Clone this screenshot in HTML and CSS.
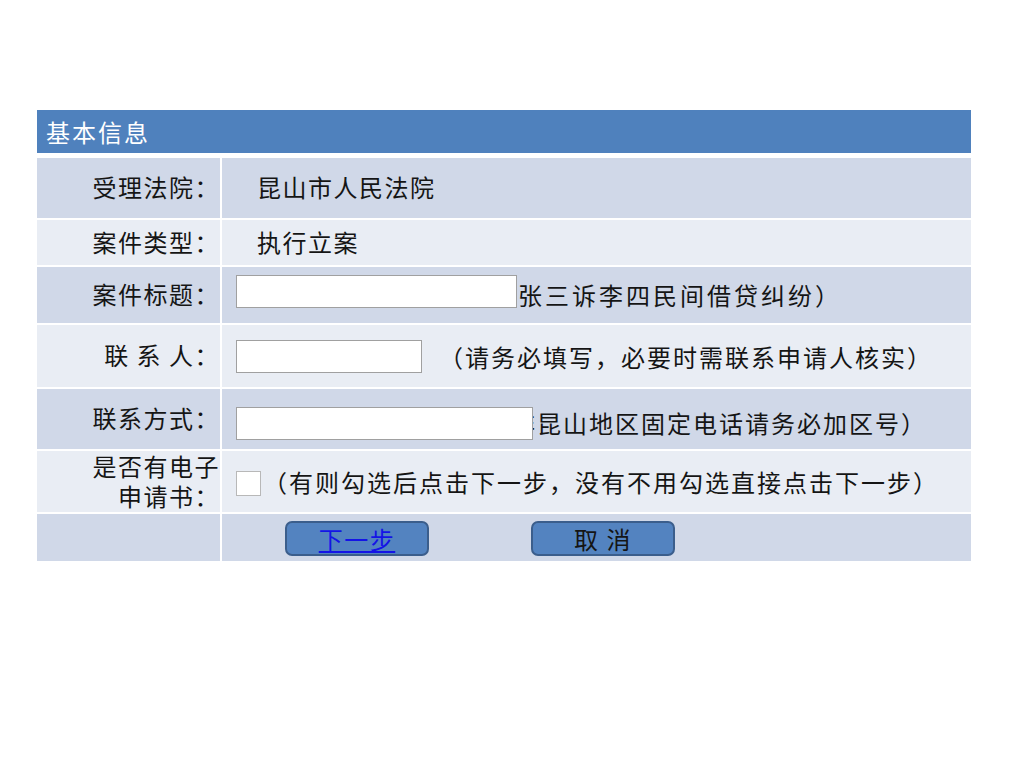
FILE: index.html
```
<!doctype html>
<html>

<head>
    <meta charset="UTF-8">
    <title>基本信息</title>
    <link rel="stylesheet" href="styles.css">
</head>

<body>
<div class="slide">
    <div class="infoTable">
        <div class="head">基本信息</div>

        <div class="label dark">受理法院：</div>
        <div class="value dark plain">昆山市人民法院</div>

        <div class="label light">案件类型：</div>
        <div class="value light plain">执行立案</div>

        <div class="label dark">案件标题：</div>
        <div class="value dark">
            <input class="box boxTitle" type="text">
            <span class="hint hintTitle">（如张三诉李四民间借贷纠纷）</span>
        </div>

        <div class="label light">联 系 人：</div>
        <div class="value light">
            <input class="box boxName" type="text">
            <span class="hint hintName">（请务必填写，必要时需联系申请人核实）</span>
        </div>

        <div class="label dark">联系方式：</div>
        <div class="value dark">
            <input class="box boxPhone" type="text">
            <span class="hint hintPhone">（非昆山地区固定电话请务必加区号）</span>
        </div>

        <div class="label light twoLine">是否有电子<br>申请书：</div>
        <div class="value light">
            <span class="check"></span>
            <span class="hint">（有则勾选后点击下一步，没有不用勾选直接点击下一步）</span>
        </div>

        <div class="label dark"></div>
        <div class="value dark btnRow">
            <div class="btn"><a href="#">下一步</a></div>
            <div class="btn">取 消</div>
        </div>
    </div>
</div>
</body>

</html>
```
FILE: styles.css
```
body {
    margin: 0;
    background-color: #fff;
    font-family: "Noto Sans CJK SC", "Noto Sans", sans-serif;
}

.slide {
    width: 1024px;
    height: 768px;
    padding: 110px 0 0 37px;
    box-sizing: border-box;
}

.infoTable {
    width: 934px;
    display: grid;
    grid-template-columns: 183px 1fr;
    grid-template-rows: 46px 60px 45px 56px 62px 60px 61px 47px;
    gap: 2px;
    font-size: 24px;
    letter-spacing: 1.5px;
    color: #151515;
}

.head {
    grid-column: 1 / 3;
    margin-bottom: 3px;
    background-color: #4f81bd;
    color: #fff;
    padding-left: 9px;
    display: flex;
    align-items: center;
    font-size: 24px;
    letter-spacing: 2px;
}

.dark {
    background-color: #d0d8e8;
}

.light {
    background-color: #e9edf4;
}

.label {
    display: flex;
    align-items: center;
    justify-content: flex-end;
    text-align: right;
    white-space: nowrap;
    padding-bottom: 3px;
}

.label.twoLine {
    line-height: 30px;
    padding-bottom: 2px;
}

.value {
    position: relative;
    display: flex;
    align-items: center;
    padding-left: 14px;
    white-space: nowrap;
}

.value.plain {
    padding-left: 35px;
    padding-bottom: 3px;
}

.hint {
    letter-spacing: 2px;
}

.box {
    height: 33px;
    margin: 0;
    padding: 0;
    box-sizing: border-box;
    border: 1px solid #a0a0a0;
    background-color: #fff;
    outline: none;
}

.boxTitle {
    position: absolute;
    left: 14px;
    top: 8px;
    width: 281px;
    z-index: 2;
}

.boxName {
    width: 186px;
}

.boxPhone {
    position: absolute;
    left: 14px;
    top: 18px;
    width: 297px;
    z-index: 2;
}

.hintTitle {
    margin-left: 228px;
    margin-bottom: 2px;
    letter-spacing: 3px;
}

.hintName {
    margin-left: 17px;
}

.hintPhone {
    margin-left: 249px;
    margin-top: 6px;
}

.check {
    width: 25px;
    height: 25px;
    box-sizing: border-box;
    border: 1px solid #b8b8b8;
    background-color: #fff;
    margin-top: 4px;
    margin-right: 2px;
}

.btnRow {
    padding-left: 63px;
    gap: 102px;
}

.btn {
    width: 144px;
    height: 35px;
    box-sizing: border-box;
    border: 2px solid #3b5e8c;
    border-radius: 7px;
    background-color: #5383c0;
    display: flex;
    align-items: center;
    justify-content: center;
    margin-top: 2px;
}

.btn a {
    color: #1414e6;
    text-decoration: underline;
}
```
